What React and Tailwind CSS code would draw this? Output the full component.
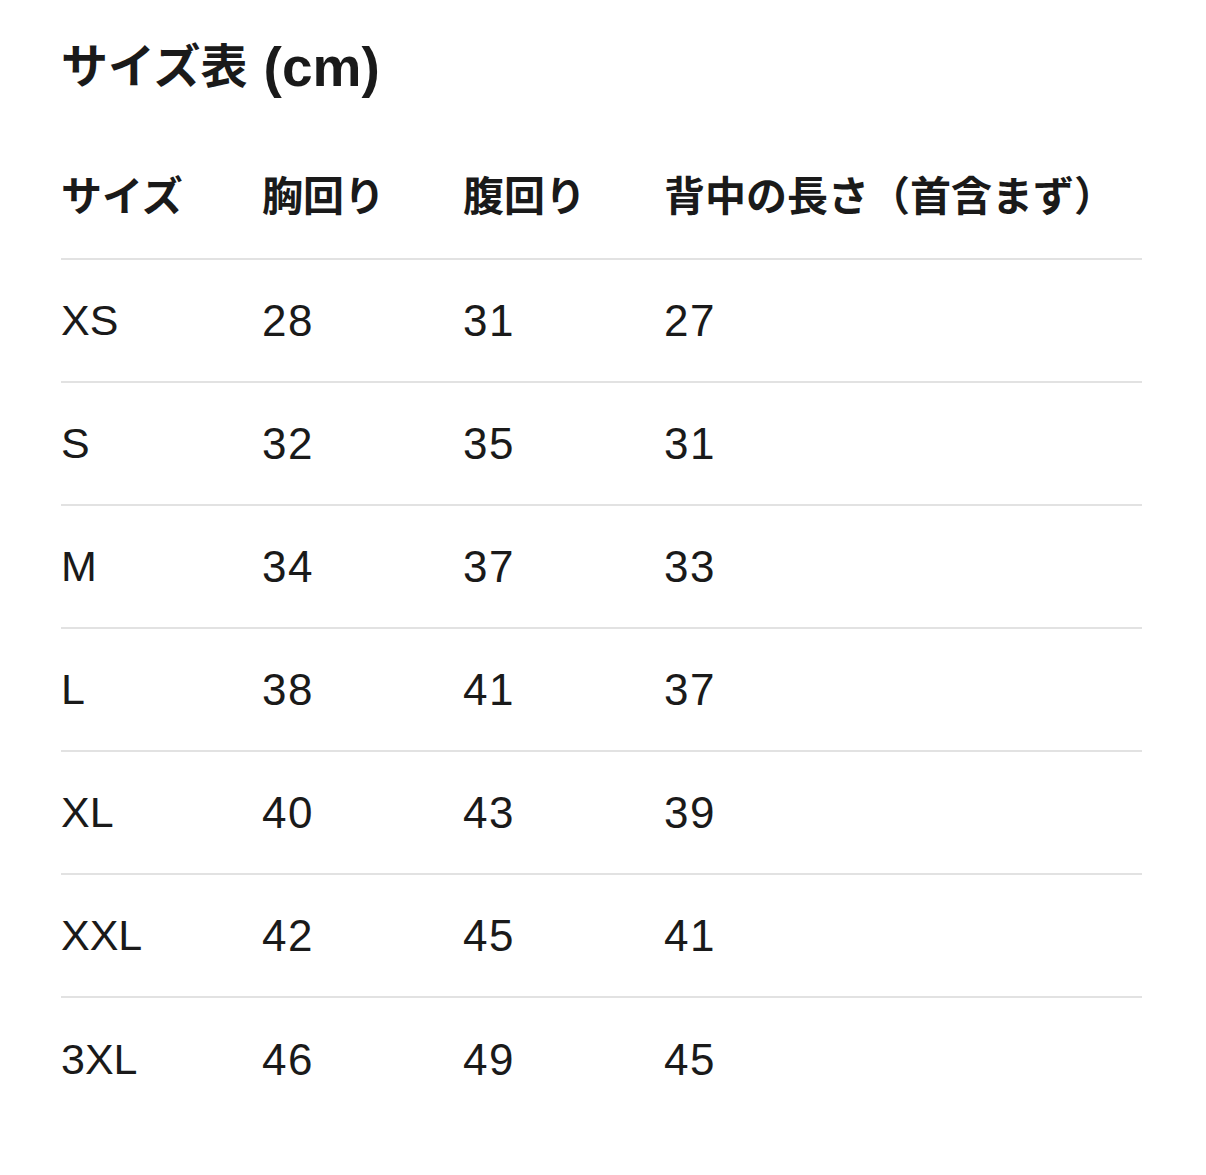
const rows = [
  ["XS", "28", "31", "27"],
  ["S", "32", "35", "31"],
  ["M", "34", "37", "33"],
  ["L", "38", "41", "37"],
  ["XL", "40", "43", "39"],
  ["XXL", "42", "45", "41"],
  ["3XL", "46", "49", "45"],
];

const headers = ["サイズ", "胸回り", "腹回り", "背中の長さ（首含まず）"];

export default function App() {
  return (
    <div
      className="min-h-[1175px] bg-white text-[#1a1a1a] pl-[61px] pr-[64px] pt-[36px]"
      style={{ fontFamily: '"Liberation Sans", "Noto Sans CJK JP", sans-serif' }}
    >
      <h1 className="text-[47px] font-bold leading-[62px] flex items-center">
        <span>サイズ表</span>
        <span className="text-[55px] ml-[16px]">(cm)</span>
      </h1>
      <div className="mt-[38px]">
        <div className="grid grid-cols-[201px_201px_201px_1fr] h-[124px] items-center border-b-2 border-[#e2e2e2]">
          {headers.map((h) => (
            <div key={h} className="text-[41px] font-bold leading-none">
              {h}
            </div>
          ))}
        </div>
        {rows.map((r, i) => (
          <div
            key={r[0]}
            className={
              "grid grid-cols-[201px_201px_201px_1fr] h-[123px] items-center " +
              (i < rows.length - 1 ? "border-b-2 border-[#e2e2e2]" : "")
            }
          >
            {r.map((c, j) => (
              <div
                key={j}
                className={
                  j === 0
                    ? "text-[43px] leading-none"
                    : "text-[44px] leading-none tracking-[1.5px]"
                }
              >
                {c}
              </div>
            ))}
          </div>
        ))}
      </div>
    </div>
  );
}
